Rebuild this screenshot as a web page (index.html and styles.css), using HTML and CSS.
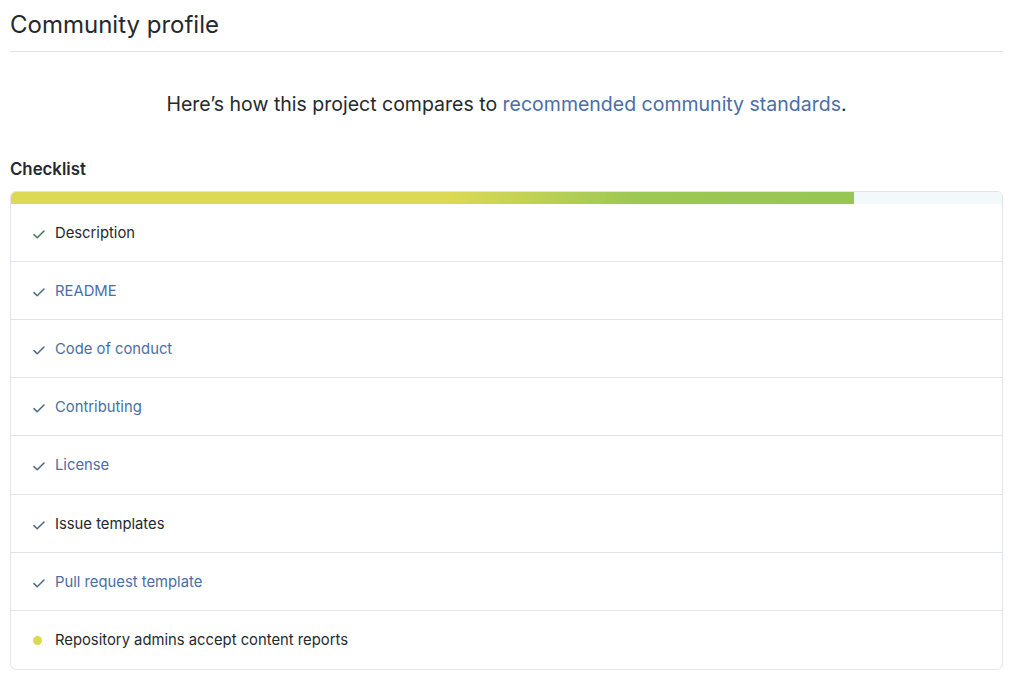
FILE: index.html
```html
<!DOCTYPE html>
<html lang="en">
<head>
<meta charset="utf-8">
<title>Community profile</title>
<link rel="stylesheet" href="styles.css">
</head>
<body>
<div class="page">
  <h1 class="title">Community profile</h1>
  <p class="lead">Here’s how this project compares to <a href="#" class="link">recommended community standards</a>.</p>
  <h2 class="section">Checklist</h2>
  <div class="box">
    <div class="progress"><div class="progress-fill" style="width: 85.1%"></div></div>
    <ul class="list">
      <li class="row"><svg class="check check-green" viewBox="0 0 16 16" width="16" height="16"><path d="M3 8.6l3.2 3.2L13 5" fill="none" stroke="currentColor" stroke-width="1.5" stroke-linecap="round" stroke-linejoin="round"/></svg><span class="label">Description</span></li>
      <li class="row"><svg class="check" viewBox="0 0 16 16" width="16" height="16"><path d="M3 8.6l3.2 3.2L13 5" fill="none" stroke="currentColor" stroke-width="1.5" stroke-linecap="round" stroke-linejoin="round"/></svg><a href="#" class="label link">README</a></li>
      <li class="row"><svg class="check" viewBox="0 0 16 16" width="16" height="16"><path d="M3 8.6l3.2 3.2L13 5" fill="none" stroke="currentColor" stroke-width="1.5" stroke-linecap="round" stroke-linejoin="round"/></svg><a href="#" class="label link">Code of conduct</a></li>
      <li class="row"><svg class="check" viewBox="0 0 16 16" width="16" height="16"><path d="M3 8.6l3.2 3.2L13 5" fill="none" stroke="currentColor" stroke-width="1.5" stroke-linecap="round" stroke-linejoin="round"/></svg><a href="#" class="label link">Contributing</a></li>
      <li class="row row-tall"><svg class="check" viewBox="0 0 16 16" width="16" height="16"><path d="M3 8.6l3.2 3.2L13 5" fill="none" stroke="currentColor" stroke-width="1.5" stroke-linecap="round" stroke-linejoin="round"/></svg><a href="#" class="label link">License</a></li>
      <li class="row"><svg class="check" viewBox="0 0 16 16" width="16" height="16"><path d="M3 8.6l3.2 3.2L13 5" fill="none" stroke="currentColor" stroke-width="1.5" stroke-linecap="round" stroke-linejoin="round"/></svg><span class="label">Issue templates</span></li>
      <li class="row"><svg class="check" viewBox="0 0 16 16" width="16" height="16"><path d="M3 8.6l3.2 3.2L13 5" fill="none" stroke="currentColor" stroke-width="1.5" stroke-linecap="round" stroke-linejoin="round"/></svg><a href="#" class="label link">Pull request template</a></li>
      <li class="row row-last"><span class="dot-wrap"><span class="dot"></span></span><span class="label">Repository admins accept content reports</span></li>
    </ul>
  </div>
</div>
</body>
</html>
```

FILE: styles.css
```css
* { box-sizing: border-box; }

html, body {
  margin: 0;
  padding: 0;
  background: #ffffff;
}

body {
  font-family: Inter, "Noto Sans", "Liberation Sans", sans-serif;
  color: #24292e;
}

.page {
  padding: 0 10px;
}

.title {
  margin: 0;
  padding: 7px 0 8px;
  font-size: 24px;
  line-height: 36px;
  font-weight: 400;
  border-bottom: 1px solid #e1e4e8;
}

.lead {
  margin: 37px 0 0;
  text-align: center;
  font-size: 19.5px;
  line-height: 30px;
  font-weight: 400;
}

.link {
  color: #4a6ea6;
  text-decoration: none;
}

.section {
  margin: 38px 0 0;
  font-size: 16.8px;
  line-height: 24px;
  font-weight: 600;
}

.box {
  margin-top: 10px;
  border: 1px solid #e1e4e8;
  border-radius: 6px;
  overflow: hidden;
}

.progress {
  height: 12px;
  background: #f3f8fa;
}

.progress-fill {
  height: 100%;
  background: linear-gradient(90deg, #dcd954 0%, #dcd954 52%, #9cc853 74%, #98c653 100%);
}

.list {
  list-style: none;
  margin: 0;
  padding: 0;
}

.row {
  display: flex;
  align-items: center;
  height: 58px;
  padding: 0 16px 0 20px;
  border-top: 1px solid #e1e4e8;
  font-size: 14.8px;
}

.row:first-child {
  border-top: none;
  height: 57px;
}

.row-tall {
  height: 59px;
}

.row-last {
  height: 59px;
}

.check {
  flex: none;
  color: #4b6a87;
  margin-right: 8px;
  margin-top: 2px;
}

.check-green {
  color: #3f7c55;
}

.dot-wrap {
  flex: none;
  width: 16px;
  height: 16px;
  margin-right: 8px;
  display: flex;
  align-items: center;
  justify-content: center;
}

.dot {
  width: 9px;
  height: 9px;
  border-radius: 50%;
  background: #dbd94f;
  margin-left: -3px;
}

.label {
  line-height: 20px;
}
```
